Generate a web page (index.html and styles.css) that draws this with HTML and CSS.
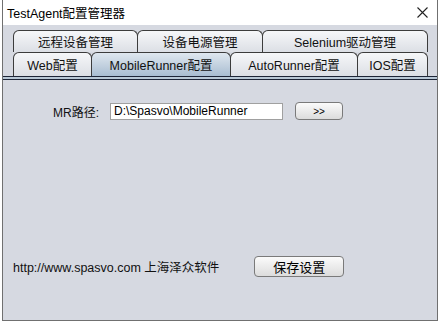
FILE: index.html
```html
<!DOCTYPE html>
<html lang="zh">

<head>
    <meta charset="UTF-8">
    <title>TestAgent配置管理器</title>
    <link rel="stylesheet" href="styles.css">
</head>

<body>
    <div class="window">
        <div class="titlebar">
            <span class="title">TestAgent配置管理器</span>
            <svg class="close" width="11" height="11" viewBox="0 0 11 11">
                <path d="M0.5 0.5 L10.5 10.5 M10.5 0.5 L0.5 10.5" stroke="#222" stroke-width="1.1" fill="none" />
            </svg>
        </div>
        <div class="tabs">
            <div class="row row1">
                <div class="tab" style="width:125px">远程设备管理</div>
                <div class="tab" style="width:126px">设备电源管理</div>
                <div class="tab" style="width:166px">Selenium驱动管理</div>
            </div>
            <div class="row row2">
                <div class="tab" style="width:79px">Web配置</div>
                <div class="tab active" style="width:140px">MobileRunner配置</div>
                <div class="tab" style="width:128px">AutoRunner配置</div>
                <div class="tab" style="width:71px">IOS配置</div>
            </div>
        </div>
        <div class="sep"></div>
        <div class="content">
            <div class="pathrow">
                <label class="label">MR路径:</label>
                <input class="field" type="text" value="D:\Spasvo\MobileRunner">
                <button class="btn small">&gt;&gt;</button>
            </div>
            <div class="footer">
                <span class="link">http://www.spasvo.com 上海泽众软件</span>
                <button class="btn save">保存设置</button>
            </div>
        </div>
    </div>
</body>

</html>
```

FILE: styles.css
```css
body {
    margin: 0;
    background: #fff;
    font-family: "Liberation Sans", "Noto Sans CJK SC", sans-serif;
    font-size: 12px;
    color: #111;
}

.window {
    margin-left: 2px;
    width: 434px;
    height: 320px;
    border: 1px solid #707070;
    border-top: none;
    background: #d6d9e1;
    display: flex;
    flex-direction: column;
}

.titlebar {
    height: 25px;
    background: #fff;
    display: flex;
    align-items: center;
    justify-content: space-between;
    padding: 0 9px 0 4px;
    font-size: 12.5px;
    color: #000;
}

.tabs {
    padding: 5px 0 0 10px;
}

.row {
    display: flex;
}

.row1 {
    height: 22px;
}

.row2 {
    height: 23px;
}

.tab {
    box-sizing: border-box;
    height: 100%;
    border: 1px solid #3c3c3c;
    border-bottom: none;
    border-radius: 6px 6px 0 0;
    background: linear-gradient(#f6f7f9, #dcdfe5);
    display: flex;
    align-items: center;
    justify-content: center;
    margin-right: -1px;
    font-size: 12.5px;
    color: #111;
}

.row2 .tab {
    height: 24px;
}

.tab.active {
    background: linear-gradient(#dfe7ef, #a9bdd1);
}

.sep {
    margin-top: 1px;
    height: 2px;
    border-top: 1px solid #1d2537;
    border-bottom: 1px solid #1d2537;
    background: #b9c8d6;
}

.content {
    flex: 1;
    display: flex;
    flex-direction: column;
}

.pathrow {
    display: flex;
    align-items: center;
    padding: 22px 0 0 50px;
}

.label {
    width: 57px;
}

.field {
    box-sizing: border-box;
    width: 173px;
    height: 17px;
    border: 1px solid #a0a0a0;
    padding: 0 3px;
    font: inherit;
    color: #000;
    background: #fff;
}

.btn {
    box-sizing: border-box;
    border: 1px solid #7a7a7a;
    border-radius: 4px;
    background: linear-gradient(#fbfbfb, #dcdcdc);
    font: inherit;
    color: #000;
    padding: 0;
}

.small {
    width: 48px;
    height: 18px;
    margin-left: 12px;
    font-size: 10px;
}

.footer {
    display: flex;
    align-items: center;
    margin-top: 136px;
    padding-left: 10px;
    font-size: 12.5px;
}

.save {
    width: 90px;
    height: 21px;
    margin-left: 35px;
    font-size: 13px;
}
```
